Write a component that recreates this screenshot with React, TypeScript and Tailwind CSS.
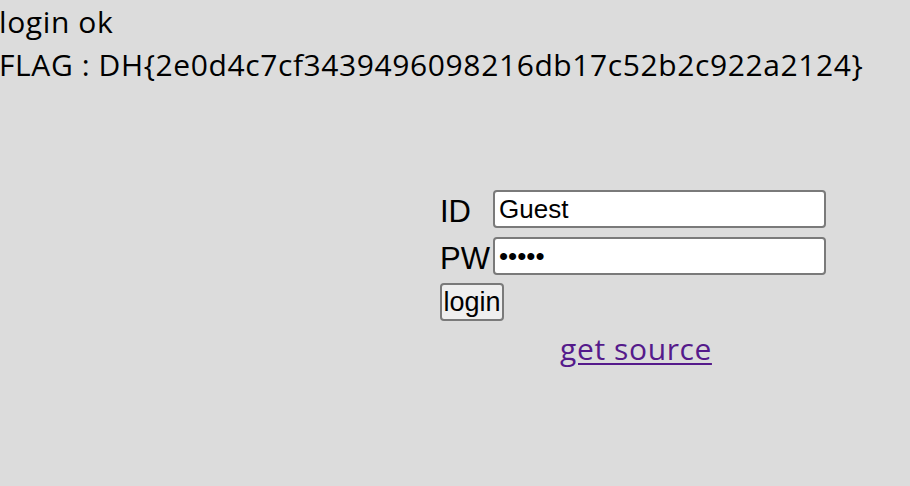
import React from "react";

export default function App() {
  return (
    <div className="min-h-screen w-full bg-[#dcdcdc] text-black overflow-hidden">
      <div className="-ml-[1px] font-['Open_Sans',sans-serif] text-[30px] leading-[43px] tracking-[0.6px]">
        <div>login ok</div>
        <div>FLAG : DH{"{"}2e0d4c7cf3439496098216db17c52b2c922a2124{"}"}</div>
      </div>

      <div className="ml-[440px] mt-[104px] w-[386px] font-['Liberation_Sans',Arial,sans-serif]">
        <div className="flex flex-col gap-[9px]">
          <div className="flex items-center">
            <span className="w-[53px] text-[31px] leading-none pt-[5px]">ID</span>
            <input
              type="text"
              defaultValue="Guest"
              readOnly
              className="w-[333px] h-[38px] bg-white border-2 border-[#7a7a7a] rounded-[4px] px-[4px] text-[26px] outline-none"
            />
          </div>
          <div className="flex items-center">
            <span className="w-[53px] text-[31px] leading-none pt-[5px]">PW</span>
            <input
              type="password"
              defaultValue="guest"
              readOnly
              className="w-[333px] h-[38px] bg-white border-2 border-[#7a7a7a] rounded-[4px] px-[4px] text-[26px] outline-none"
            />
          </div>
        </div>
        <button className="mt-[8px] h-[38px] w-[64px] bg-[#efefef] border-2 border-[#7a7a7a] rounded-[4px] text-[27px] leading-none">
          login
        </button>
        <div className="mt-[7px] pl-[6px] text-center font-['Open_Sans',sans-serif] text-[30px] leading-[41px] tracking-[0.6px]">
          <a href="#" className="text-[#551a8b] underline decoration-2 underline-offset-[3px]">
            get source
          </a>
        </div>
      </div>
    </div>
  );
}
